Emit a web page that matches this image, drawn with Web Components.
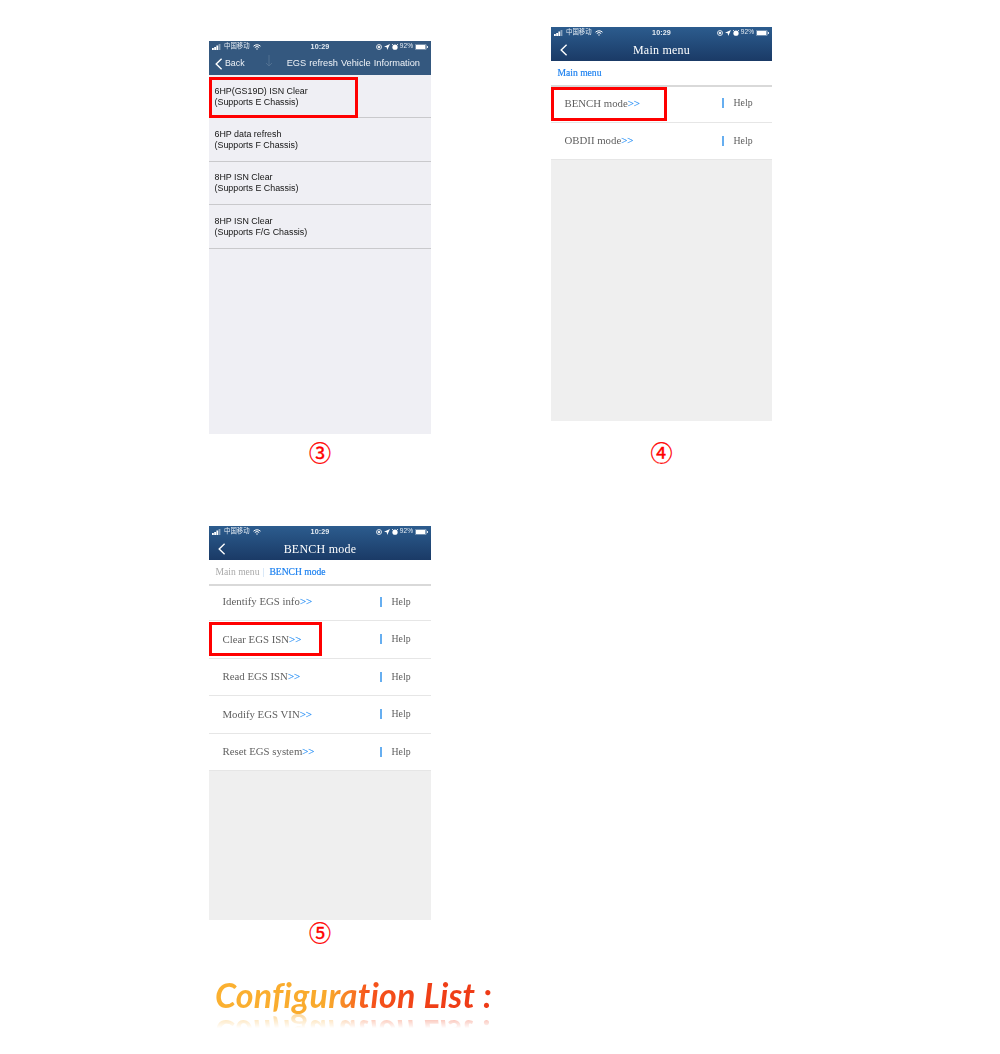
<!DOCTYPE html>
<html lang="en"><head><meta charset="utf-8"><title>EGS</title>
<style>
html,body{margin:0;padding:0;background:#fff}
body{width:1000px;height:1054px;overflow:hidden}
</style></head><body>
<shot-page>
  <shot-cell style="--top:41px;--h:393px;--cap:38px;--capgap:0px" label="③">
    <app-phone flat>
      <app-head flat back="Back" heading="EGS refresh Vehicle Information"></app-head>
      <plain-row mark="149"><span>6HP(GS19D) ISN Clear</span><span>(Supports E Chassis)</span></plain-row>
      <plain-row><span>6HP data refresh</span><span>(Supports F Chassis)</span></plain-row>
      <plain-row><span>8HP ISN Clear</span><span>(Supports E Chassis)</span></plain-row>
      <plain-row><span>8HP ISN Clear</span><span>(Supports F/G Chassis)</span></plain-row>
    </app-phone>
  </shot-cell>
  <shot-cell style="--top:27px;--h:394px;--cap:38px;--capgap:13px" label="④">
    <app-phone>
      <app-head heading="Main menu"></app-head>
      <bread-crumb><b>Main menu</b></bread-crumb>
      <menu-row mark="116" style="--mt:2px;--mb:1px">BENCH mode</menu-row>
      <menu-row>OBDII mode</menu-row>
    </app-phone>
  </shot-cell>
  <shot-cell style="--top:54px;--h:394px;--cap:26px;--capgap:0px" label="⑤">
    <app-phone>
      <app-head heading="BENCH mode"></app-head>
      <bread-crumb style="height:23.5px"><i>Main menu</i><u>|</u><b>BENCH mode</b></bread-crumb>
      <menu-row>Identify EGS info</menu-row>
      <menu-row mark="113" style="--mt:1px;--mb:1.5px">Clear EGS ISN</menu-row>
      <menu-row>Read EGS ISN</menu-row>
      <menu-row>Modify EGS VIN</menu-row>
      <menu-row>Reset EGS system</menu-row>
    </app-phone>
  </shot-cell>
  <reflect-title>Configuration List :</reflect-title>
</shot-page>
<script>
const def=(name,html,init)=>customElements.define(name,class extends HTMLElement{
  constructor(){super();this.attachShadow({mode:'open'}).innerHTML=html;}
  connectedCallback(){if(init)init(this,this.shadowRoot);}
});
def('shot-page',`<style>
:host{display:grid;grid-template-columns:222px 221px;column-gap:120px;padding-left:209px;align-items:start;align-content:start}
</style><slot></slot>`);
def('shot-cell',`<style>
:host{display:flex;flex-direction:column;padding-top:var(--top);min-width:0}
.body{height:var(--h);display:flex}
.cap{box-sizing:border-box;margin-top:var(--capgap);height:var(--cap);padding-bottom:4px;display:flex;align-items:center;justify-content:center;
font:22px/1 "Noto Sans CJK SC","DejaVu Sans",sans-serif;color:#f00;-webkit-text-stroke:.35px #f00}
::slotted(*){flex:1}
</style><div class="body"><slot></slot></div><div class="cap"></div>`,(el,s)=>{s.querySelector('.cap').textContent=el.getAttribute('label')});
def('app-phone',`<style>
:host{display:flex;flex-direction:column;background:#efefef;overflow:hidden;filter:blur(.3px)}
:host([flat]){background:#efeff4}
</style><slot></slot>`);
def('status-bar',`<style>
:host{display:flex;align-items:center;height:11px;padding:0 3px 2px;color:#e4ebf3;font:6.6px/1 "Liberation Sans","Noto Sans CJK SC",sans-serif;flex:none}
svg{display:block;flex:none}
.l,.r{flex:1;display:flex;align-items:center}
.l{gap:3px}.r{justify-content:flex-end;gap:2px}
.t{font-size:7.2px;font-weight:bold;letter-spacing:.1px}
.cn{font-family:"Noto Sans CJK SC",sans-serif;font-size:6.4px}
</style>
<div class="l">
<svg width="9" height="6" viewBox="0 0 9 6" fill="#fff"><rect x="0" y="4" width="1.8" height="2"/><rect x="2.2" y="3" width="1.8" height="3"/><rect x="4.4" y="1.5" width="1.8" height="4.5"/><rect x="6.6" y="0" width="1.8" height="6" opacity=".45"/></svg>
<span class="cn">中国移动</span>
<svg width="8" height="6" viewBox="0 0 8 6" fill="none" stroke="#fff" stroke-width="1"><path d="M.5 2.2a5 5 0 0 1 7 0M1.8 3.5a3.2 3.2 0 0 1 4.4 0"/><circle cx="4" cy="5" r=".7" fill="#fff" stroke="none"/></svg>
</div>
<span class="t">10:29</span>
<div class="r">
<svg width="6" height="6" viewBox="0 0 6 6" fill="none" stroke="#fff" stroke-width=".8"><circle cx="3" cy="3" r="2.5"/><circle cx="3" cy="3" r=".9" fill="#fff"/></svg>
<svg width="6" height="6" viewBox="0 0 6 6" fill="#fff"><path d="M6 0 0 2.8l2.7.5.5 2.7z"/></svg>
<svg width="6" height="6" viewBox="0 0 6 6" fill="#fff"><circle cx="3" cy="3.2" r="2.6"/><path d="M0 1 1 0M6 1 5 0" stroke="#fff" stroke-width=".8"/></svg>
<span>92%</span>
<svg width="13" height="6" viewBox="0 0 13 6"><rect x=".3" y=".3" width="11" height="5.4" rx="1" fill="none" stroke="#dfe6ee" stroke-width=".5"/><rect x="1" y="1" width="9.4" height="4" fill="#fff"/><rect x="12" y="2" width="1" height="2" fill="#dfe6ee"/></svg>
</div>`);
def('app-head',`<style>
:host{display:flex;flex-direction:column;height:34px;flex:none;color:#fff;background:linear-gradient(#2c5c8e,#1a3a66)}
:host([flat]){background:#34587f}
nav{flex:1;display:flex;align-items:center;position:relative;padding:0 0 2px 6px;font:12px/1 "Liberation Serif",serif}
svg{display:block;flex:none}
.t{position:absolute;left:0;right:0;text-align:center;top:4px;letter-spacing:.02em}
:host([flat]) nav{font:8.8px/1 "Liberation Sans",sans-serif;color:#eef2f7;padding-left:6px}
:host([flat]) .t{font-size:9.25px;left:auto;right:11px;top:5px;text-align:right;letter-spacing:0;word-spacing:.4px}
.b{margin-left:2px}
.ghost{position:absolute;left:56px;top:1px;opacity:.14}
</style><status-bar></status-bar>
<nav><svg class="chev" width="8" height="12" viewBox="0 0 8 12" fill="none" stroke="#fff" stroke-width="1.4"><path d="M6.6.8 1.2 6l5.4 5.2"/></svg><span class="b"></span><svg class="ghost" width="8" height="12" viewBox="0 0 8 12" fill="none" stroke="#fff"><path d="M4 0v11M1 8l3 3 3-3"/></svg><span class="t"></span></nav>`,(el,s)=>{
 s.querySelector('.t').textContent=el.getAttribute('heading');
 s.querySelector('.b').textContent=el.getAttribute('back')||'';
 if(!el.hasAttribute('flat')){s.querySelector('.ghost').remove();s.querySelector('nav').style.paddingLeft='9px';}
});
def('red-mark',`<style>
:host{position:absolute;left:0;top:var(--mt,1.5px);bottom:var(--mb,-1px);box-sizing:border-box;border:3px solid #f00;z-index:3}
</style>`);
def('plain-row',`<style>
:host{display:flex;flex-direction:column;justify-content:center;position:relative;height:43.4px;box-sizing:border-box;flex:none;padding:1px 0 0 5.5px;border-bottom:1.2px solid #c9c9cc;background:#efeff4;color:#141414;font:8.9px/11px "Liberation Sans",sans-serif}
::slotted(span){display:block}
</style><slot></slot>`,(el)=>addMark(el));
def('bread-crumb',`<style>
:host{display:flex;align-items:center;height:24px;flex:none;background:#fff;position:relative;z-index:2;box-shadow:0 2px 0 #d9d9d9;padding-left:6.5px;font:9.6px/1 "Liberation Serif",serif;color:#1e82f0}
::slotted(b){font-weight:normal;-webkit-text-stroke:.2px #1e82f0}
::slotted(i){font-style:normal;color:#a9a9a9}
::slotted(u){text-decoration:none;color:#b9d6f2;margin:0 5px 0 3px}
</style><slot></slot>`);
def('menu-row',`<style>
:host{display:grid;grid-template-columns:157px 2px auto;column-gap:0;align-items:center;position:relative;height:37.5px;box-sizing:border-box;flex:none;padding-left:13.5px;background:#fff;border-bottom:1px solid #e6e6e6;font:10.8px/1 "Liberation Serif",serif;color:#5f5f5f}
.a{color:#2d92f5;-webkit-text-stroke:.15px #2d92f5}
.bar{height:10px;background:#66aef0}
.h{margin-left:10px;font-size:9.8px}
</style><span><slot></slot><span class="a">&gt;&gt;</span></span><span class="bar"></span><span class="h">Help</span>`,(el)=>addMark(el));
function addMark(el){
 if(el.hasAttribute('mark')&&!el.querySelector('red-mark')){
  const m=document.createElement('red-mark');
  m.style.width=el.getAttribute('mark')+'px';
  el.appendChild(m);
 }
}
def('reflect-title',`<style>
:host{grid-column:1 / span 2;display:block;margin:29px 0 0 6px}
div{display:inline-block;font:italic 700 34px/1 "Lato",sans-serif;font-variant-ligatures:none;letter-spacing:.25px;white-space:nowrap;height:40px;line-height:40px;
background:linear-gradient(90deg,#fbb131 0,#f9a92c 41%,#f6561b 55%,#f04017 75%,#ee3a16 100%);-webkit-background-clip:text;background-clip:text;color:transparent;
-webkit-box-reflect:below -2px linear-gradient(transparent 62%,rgba(0,0,0,.5) 100%)}
</style><div><slot></slot></div>`);
</script>
</body></html>
